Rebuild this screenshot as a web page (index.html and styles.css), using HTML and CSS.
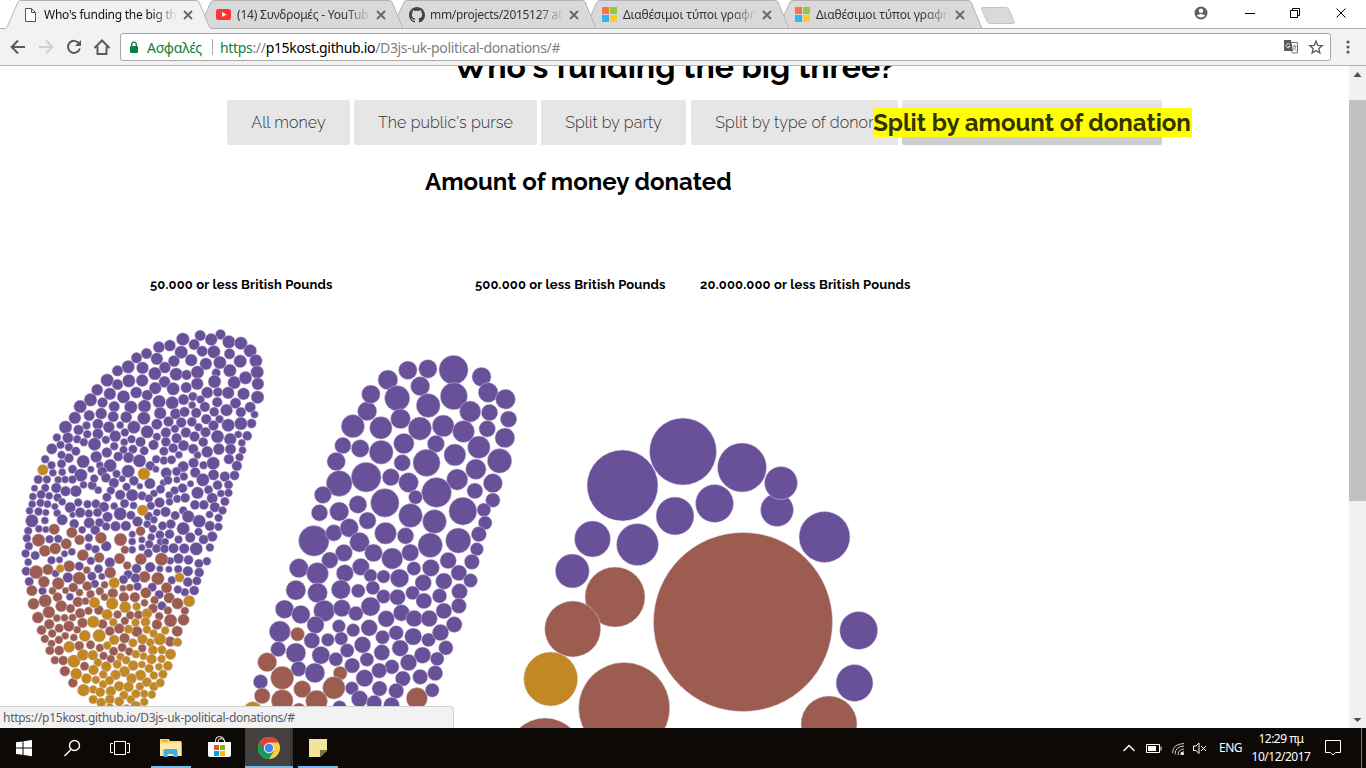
FILE: index.html
```html
<!DOCTYPE html>
<html lang="el">
<head>
<meta charset="utf-8">
<title>Who's funding the big three?</title>
<link rel="stylesheet" href="styles.css">
</head>
<body>
<div class="tabstrip">
  <div class="tab active">
    <svg class="shape" width="208" height="29"><path d="M0 29V28.500H5C7 28.500 7 27 8 25L18 2Q19 .5 21 .5H196Q198 .5 199 2L209 26Q210 28.500 212 28.500V29.500"/></svg>
    <svg class="fav" width="16" height="16" viewBox="0 0 16 16"><path d="M2.500 1.500h6l4 4v9h-10zM8.500 1.500v4h4" fill="#fff" stroke="#555"/></svg>
    <span class="title t1">Who's funding the big th</span>
    <svg class="x" width="10" height="10"><path d="M1 1l8 8M9 1l-8 8"/></svg>
  </div>
  <div class="tab">
    <svg class="shape" width="208" height="29"><path d="M6 28.500L18 2Q19 .5 21 .5H196Q198 .5 199 2L210 28.500Z"/></svg>
    <svg class="fav" width="16" height="16" viewBox="0 0 16 16"><rect x="0" y="2" width="15" height="11" rx="2.500" fill="#f33"/><path d="M6 5l4.500 2.500L6 10z" fill="#fff"/></svg>
    <span class="title t2">(14) Συνδρομές - YouTub</span>
    <svg class="x" width="10" height="10"><path d="M1 1l8 8M9 1l-8 8"/></svg>
  </div>
  <div class="tab">
    <svg class="shape" width="208" height="29"><path d="M6 28.500L18 2Q19 .5 21 .5H196Q198 .5 199 2L210 28.500Z"/></svg>
    <svg class="fav" width="16" height="16" viewBox="0 0 16 16"><path fill="#444" d="M8 0C3.600 0 0 3.600 0 8c0 3.500 2.300 6.500 5.500 7.600.4.100.5-.2.5-.4v-1.400c-2.200.5-2.700-1-2.700-1-.4-.9-.9-1.200-.9-1.200-.7-.5.100-.5.100-.5.800.100 1.200.8 1.200.8.700 1.300 1.900.9 2.300.7.100-.5.300-.9.500-1.100-1.800-.2-3.600-.9-3.600-4 0-.9.300-1.600.8-2.100-.1-.2-.4-1 .1-2.100 0 0 .7-.2 2.200.8a7.500 7.500 0 0 1 4 0c1.500-1 2.200-.8 2.200-.8.400 1.100.2 1.900.1 2.100.5.600.8 1.300.8 2.100 0 3.100-1.900 3.700-3.700 3.900.3.400.6.900.6 1.600v2.200c0 .2.100.5.500.4C13.700 14.500 16 11.500 16 8c0-4.400-3.600-8-8-8z"/></svg>
    <span class="title t3">mm/projects/2015127 at</span>
    <svg class="x" width="10" height="10"><path d="M1 1l8 8M9 1l-8 8"/></svg>
  </div>
  <div class="tab">
    <svg class="shape" width="208" height="29"><path d="M6 28.500L18 2Q19 .5 21 .5H196Q198 .5 199 2L210 28.500Z"/></svg>
    <svg class="fav" width="16" height="16"><path fill="#f8734c" d="M0 0h7v7H0z"/><path fill="#95c936" d="M8 0h7v7H8z"/><path fill="#33b4ef" d="M0 8h7v7H0z"/><path fill="#fecb35" d="M8 8h7v7H8z"/></svg>
    <span class="title t4">Διαθέσιμοι τύποι γραφη</span>
    <svg class="x" width="10" height="10"><path d="M1 1l8 8M9 1l-8 8"/></svg>
  </div>
  <div class="tab">
    <svg class="shape" width="208" height="29"><path d="M6 28.500L18 2Q19 .5 21 .5H196Q198 .5 199 2L210 28.500Z"/></svg>
    <svg class="fav" width="16" height="16"><path fill="#f8734c" d="M0 0h7v7H0z"/><path fill="#95c936" d="M8 0h7v7H8z"/><path fill="#33b4ef" d="M0 8h7v7H0z"/><path fill="#fecb35" d="M8 8h7v7H8z"/></svg>
    <span class="title t4">Διαθέσιμοι τύποι γραφη</span>
    <svg class="x" width="10" height="10"><path d="M1 1l8 8M9 1l-8 8"/></svg>
  </div>
  <svg class="newtab" width="36" height="20"><path d="M2.500.5H26Q28 .5 29 2.500L34 14.500Q35 16.500 33 16.500H10Q8 16.500 7 14.500L1.500 2Q1 .5 2.500.5z" fill="#d9d9d9" stroke="#c4c4c4"/></svg>
  <svg class="winctl" width="160" height="28" viewBox="1190 0 160 28">
    <circle cx="1201" cy="13" r="6.500" fill="#5f5f5f"/><circle cx="1201" cy="10.700" r="2.200" fill="#fff"/><path d="M1196.700 15.500q4.300-3 8.600 0q-4.300 4-8.600 0z" fill="#fff"/>
    <path d="M1245 13.500h10M1290.500 10.500h7v7h-7zM1292.500 10v-1.500h7v7h-2M1336.500 8.500l9 9M1345.500 8.500l-9 9" fill="none" stroke="#000"/>
  </svg>
</div>
<div class="toolbar">
  <svg class="navicons" width="120" height="36" viewBox="0 29 120 36" fill="none" stroke="#5a5a5a" stroke-width="2">
    <path d="M25 47H12M18 40.500L11.700 47l6.300 6.500"/>
    <path d="M39 47h13M46 40.500l6.300 6.500-6.300 6.500" stroke="#d0d0d0"/>
    <path d="M79 43.500a6 6 0 1 0 .8 5"/><path d="M81 40v6h-6z" fill="#5a5a5a" stroke="none"/>
    <path d="M94.500 48l7.500-7.500 7.500 7.500M97.500 46.500v7.500h9v-7.500"/>
  </svg>
  <div class="omnibox">
    <svg class="lock" width="10" height="13"><rect x="1" y="5" width="8" height="7" rx="1" fill="#0b8043"/><path d="M2.700 5V3.500a2.300 2.300 0 0 1 4.600 0V5" fill="none" stroke="#0b8043" stroke-width="1.300"/></svg>
    <span class="secure">Ασφαλές</span><i class="sep"></i>
    <span class="url"><b class="g">https</b>://<b>p15kost.github.io</b>/D3js-uk-political-donations/#</span>
    <svg class="boxicons" width="44" height="20" viewBox="1282 37 44 20">
      <path d="M1284 40h7l2 11h-8q-1 0-1-1z" fill="#5a5a5a"/><path d="M1290.500 42.500h7v10.500h-5l-2-2.500" fill="none" stroke="#777"/><path d="M1292.500 46h4M1294.500 45v1.500M1296 46q-1 3-3 4M1293.500 47.500l3 3" fill="none" stroke="#777" stroke-width=".8"/><path d="M1289.800 44.500a2 2 0 1 0 .2 2h-2" fill="none" stroke="#eee" stroke-width=".9"/>
      <path d="M1316 41l1.700 4.300 4.600.3-3.500 2.900 1.100 4.500-3.900-2.500-3.900 2.500 1.100-4.500-3.500-2.900 4.600-.3z" fill="none" stroke="#5a5a5a" stroke-width="1.300"/>
    </svg>
  </div>
  <svg class="menu" width="18" height="20"><g fill="#5a5a5a"><circle cx="9" cy="5" r="1.600"/><circle cx="9" cy="10" r="1.600"/><circle cx="9" cy="15" r="1.600"/></g></svg>
</div>
<div class="view">
  <main class="page">
    <h1>Who's funding the big three?</h1>
    <nav class="buttons">
      <a class="btn w1">All money</a><a class="btn w2">The public's purse</a><a class="btn w3">Split by party</a><a class="btn w4">Split by type of donor</a><a class="btn w5"><span class="mark">Split by amount of donation</span></a>
    </nav>
    <h2>Amount of money donated</h2>
    <svg class="chart" width="1349" height="508" viewBox="0 220 1349 508">
      <g class="labels">
        <text x="150" y="289" textLength="182.500">50.000 or less British Pounds</text>
        <text x="475" y="289" textLength="190.500">500.000 or less British Pounds</text>
        <text x="700" y="289" textLength="210.500">20.000.000 or less British Pounds</text>
      </g>
      <g id="bubbles"></g>
    </svg>
  </main>
  <div class="scroll">
    <svg width="17" height="17"><path d="M8.500 6l4 5h-8z" fill="#505050"/></svg>
    <div class="thumb"></div>
    <svg class="down" width="17" height="17"><path d="M8.500 11l4-4h-8z" fill="#505050"/></svg>
  </div>
  <div class="status"><span>https://p15kost.github.io/D3js-uk-political-donations/#</span></div>
</div>
<footer class="taskbar">
  <svg class="apps" width="345" height="40" viewBox="0 728 345 40">
    <path d="M16 742.300l6.500-.9v6.200H16zM23.500 741.200l8.500-1.200v7.600h-8.500zM16 748.600h6.500v6.200l-6.500-.9zM23.500 748.600H32v7.600l-8.500-1.200z" fill="#fff"/>
    <circle cx="74.500" cy="745.500" r="5" fill="none" stroke="#fff" stroke-width="1.400"/><path d="M71 749.500l-6.500 6.500" stroke="#fff" stroke-width="1.500"/>
    <path d="M114.500 741.500h11v13h-11zM113 743.500h-2.500v9h2.500M127 743.500h2.500v9H127" fill="none" stroke="#fff"/>
    <path d="M160 739h9l1 2h11.500v15H160z" fill="#f8d775"/><path d="M162 740h6v1.500h-6z" fill="#e8a915"/><path d="M160 743h21.500v13H160z" fill="#fce9a4"/><path d="M163.500 757v-6q0-2 2-2h10q2 0 2 2v6h-4v-3h-6v3z" fill="#3bb0e8"/>
    <path d="M208 742h23v13q0 2-2 2h-19q-2 0-2-2z" fill="#fff"/><path d="M215.500 742v-1.500q0-4 4-4t5 4v1.500M218 742q0-3.500 3-3.500t4 3.500" fill="none" stroke="#fff"/>
    <path d="M214 745h5v5h-5z" fill="#f25022"/><path d="M220 745h5v5h-5z" fill="#7fba00"/><path d="M214 751h5v5h-5z" fill="#00a4ef"/><path d="M220 751h5v5h-5z" fill="#ffb900"/>
    <path d="M245 728h45v38h-45z" fill="#444241"/><path d="M290 728h3v38h-3z" fill="#383534"/>
    <circle cx="269" cy="748" r="11" fill="#ffcd40"/><path d="M269 748L259.470 742.500A11 11 0 0 0 269 759L274 751z" fill="#109d58"/><path d="M259.470 742.500A11 11 0 0 1 278.530 742.500H269L264.500 750z" fill="#db4437"/><circle cx="269" cy="748" r="5.200" fill="#f1f1f1"/><circle cx="269" cy="748" r="4.200" fill="#4285f4"/>
    <path d="M309 739h18v11l-7 7h-11z" fill="#f0e59a"/><path d="M320 750h7v1l-7 6.500z" fill="#7b7442"/>
    <path d="M151 766h40v2h-40zM245 766h48v2h-48zM298 766h40v2h-40z" fill="#76b9ed"/>
  </svg>
  <svg class="tray" width="90" height="40" viewBox="1120 728 90 40" fill="none" stroke="#fff">
    <path d="M1123.500 751l5.500-5.500 5.500 5.500" stroke-width="1.400"/>
    <path d="M1146.500 744.500h13v8h-13zM1161 746.500v4"/><path d="M1148 746h8v5h-8z" fill="#fff" stroke="none"/>
    <path d="M1172.500 753q0-9 11.500-9.500M1175 754.500q0-8 9-8.500M1178 755q0-5.500 6-6M1180.500 755q0-3 3.500-3.500" stroke="#ccc"/><circle cx="1182.500" cy="753.500" r="1.500" fill="#fff" stroke="none"/>
    <path d="M1193.500 746v4.500h2.500l3 3v-10.500l-3 3zM1201 746l5 5M1206 746l-5 5"/>
  </svg>
  <span class="lang">ENG</span>
  <div class="clock"><span>12:29 πμ</span><span class="date">10/12/2017</span></div>
  <svg class="note" width="18" height="40" viewBox="1324 728 18 40"><path d="M1325.500 740.500h15v12h-5l-2.500 2.500-2.500-2.500h-5z" fill="none" stroke="#fff"/></svg>
  <i class="peek"></i>
</footer>
<script src="bubbles.js"></script>
</body>
</html>
```

FILE: styles.css
```css
* { box-sizing: border-box; }
body { margin: 0; width: 1366px; height: 768px; overflow: hidden; background: #fff; font-family: "Noto Sans", "Open Sans", sans-serif; display: flex; flex-direction: column; }
svg { display: block; flex: none; }
.tabstrip { height: 29px; flex: none; display: flex; border-bottom: 1px solid #b3b1b3; }
.tab { width: 193px; height: 29px; flex: none; display: flex; align-items: center; padding-left: 23px; position: relative; }
.tab:nth-child(1) { z-index: 5; }
.tab:nth-child(2) { z-index: 4; }
.tab:nth-child(3) { z-index: 3; }
.tab:nth-child(4) { z-index: 2; }
.tab:nth-child(5) { z-index: 1; }
.tab .shape { position: absolute; left: 0; top: 0; overflow: visible; }
.shape path { fill: #d9d9d9; stroke: #b3b3b3; }
.active .shape path { fill: #f2f2f2; }
.fav { position: relative; margin-right: 5px; }
.title { position: relative; width: 134px; height: 18px; line-height: 18px; font-size: 12px; letter-spacing: -.1px; color: #333; white-space: nowrap; overflow: hidden; -webkit-mask-image: linear-gradient(90deg, #000 108px, transparent 134px); mask-image: linear-gradient(90deg, #000 108px, transparent 134px); }
.t1 { color: #111; letter-spacing: -.25px; }
.t2 { letter-spacing: -.2px; }
.t3 { letter-spacing: -.3px; }
.x { position: relative; margin-left: 7px; fill: none; stroke: #666; stroke-width: 1.800; }
.newtab { margin: 7px 0 0 15px; }
.winctl { margin-left: auto; margin-right: 16px; }
.toolbar { height: 37px; flex: none; display: flex; align-items: flex-start; background: #f2f2f2; border-bottom: 1px solid #b6b4b6; }
.omnibox { width: 1211px; height: 28px; margin-top: 4px; display: flex; align-items: center; background: #fff; border: 1px solid #a8a8a8; border-radius: 3px; padding-left: 8px; font-size: 14px; white-space: nowrap; }
.lock { margin-right: 8px; }
.secure { color: #0b8043; width: 55px; letter-spacing: -.25px; }
.sep { width: 1px; height: 16px; background: #aaa; margin: 0 7px 0 10px; }
.url { color: #808080; letter-spacing: -.33px; }
.url b { font-weight: 400; color: #000; }
.url .g { color: #0b8043; }
.boxicons { margin-left: auto; margin-right: 4px; }
.menu { margin: 8px 0 0 8px; }
.view { height: 662px; flex: none; display: flex; position: relative; overflow: hidden; }
.page { width: 1349px; height: 662px; flex: none; overflow: hidden; font-family: "Raleway", Lato, sans-serif; color: #000; }
h1 { margin: -19px 0 0; height: 53px; line-height: 40px; font-size: 32px; font-weight: 700; text-align: center; white-space: nowrap; }
.buttons { margin-left: 227px; display: flex; height: 45px; }
.btn { height: 45px; border-radius: 2px; background: #e6e6e6; color: #333; font-size: 16px; font-weight: 300; letter-spacing: .08px; line-height: 45px; text-align: center; white-space: nowrap; margin-right: 4px; flex: none; }
.w1 { width: 123px; } .w2 { width: 183px; } .w3 { width: 145px; margin-right: 5px; } .w4 { width: 207px; }
.w5 { width: 260px; background: linear-gradient(#e6e6e6, #ccc); display: flex; justify-content: center; align-items: center; position: relative; }
.mark { flex: none; width: 319px; height: 29px; line-height: 29px; background: #ff0; color: #330; font-size: 24px; font-weight: 700; letter-spacing: 0; }
h2 { margin: 22px 0 0 425px; height: 53px; line-height: 30px; font-size: 24px; font-weight: 700; white-space: nowrap; }
.labels { font-size: 13px; font-weight: 700; }
.scroll { width: 17px; background: #f1f1f1; display: flex; flex-direction: column; }
.thumb { height: 401px; margin-top: 17px; background: #c1c1c1; }
.down { margin-top: auto; }
.status { position: absolute; left: 0; bottom: 0; width: 454px; height: 22px; padding-left: 3px; background: #f2f2f2; border: solid #d2d2d2; border-width: 1px 1px 0 0; border-radius: 0 4px 0 0; color: #5c5c5c; font-size: 12px; letter-spacing: -.28px; line-height: 22px; white-space: nowrap; }
.taskbar { height: 40px; flex: none; display: flex; background: #0d0907; color: #fff; font-size: 12px; }
.tray { margin-left: 775px; }
.lang { width: 24px; margin-left: 9px; line-height: 40px; letter-spacing: -.5px; }
.clock { width: 60px; margin-left: 8px; display: flex; flex-direction: column; align-items: center; line-height: 18px; padding-top: 2px; letter-spacing: -.5px; white-space: nowrap; }
.note { margin-left: 13px; }
.peek { margin-left: 19px; width: 1px; background: #777; }
```

FILE: bubbles.js
```js
// Each group: origin of its grid, grid units per pixel, colour, then "x,y,r" triples.
const P = '#69519a', B = '#9c5d50', O = '#c28823';
const groups = [
  [10, 320, 3, P, `631,43,14 570,46,15 603,58,17 518,57,18 552,73,15 479,76,16 446,81,16 656,65,18 692,69,18 720,92,18 576,93,15 611,95,18 658,101,15 513,96,18 409,100,15 379,113,15 440,116,17 491,123,16 543,120,17 587,131,17 629,127,18 690,123,18 737,122,18 354,140,18 397,143,17 464,142,16 322,152,15 434,160,18 498,162,18 529,164,14 562,156,18 618,158,12 659,151,18 741,156,18 291,180,18 322,193,15 356,182,18 396,181,17 463,185,16 561,191,17 613,184,18 672,187,18 706,173,18 743,191,17 261,209,16 299,221,17 378,217,16 435,204,17 489,206,18 528,202,15 340,230,18 411,225,15 548,229,12 591,217,16 623,216,13 654,218,17 700,221,17 742,231,18 241,239,18 277,247,14 520,238,15 571,238,11 621,246,14 676,249,15 447,244,18 486,248,18 546,255,10 584,260,14 720,261,15 210,259,18 312,259,15 362,261,18 403,258,18 273,280,16 237,286,15 309,289,15 450,279,17 496,281,15 523,275,14 558,278,14 612,275,13 649,270,17 692,276,14 733,283,10 194,293,17 348,291,16 401,294,18 628,297,11 588,297,14 545,305,13 513,307,14 475,304,14 440,312,15 724,310,13 692,310,18 654,315,18 610,316,14 565,321,11 263,312,15 229,316,11 296,321,16 330,315,10 371,321,18 166,321,18 205,329,14 411,335,18 344,337,11 494,326,11 527,337,14 586,336,14 467,337,14 263,341,15 231,342,11 315,348,16 440,350,11 553,349,14 622,349,18 684,343,10 711,347,13 660,357,17 140,352,11 173,353,15 201,357,11 287,359,11 364,357,11 342,366,10 499,354,14 467,365,13 391,365,14 579,366,13 221,366,11 253,372,18 430,374,14 695,368,10 151,374,11 176,381,11 312,378,11`],
  [10, 440, 3, P, `125,26,15 197,33,12 290,37,14 368,27,12 402,32,12 461,33,12 489,24,13 520,16,15 549,26,14 591,35,16 626,27,16 661,27,15 697,30,10 688,51,11 340,29,11 258,50,16 219,64,18 176,54,13 154,44,11 105,57,11 124,75,11 154,71,12 187,87,12 128,98,10 156,96,10 212,105,18 242,87,9 269,75,10 300,76,18 324,49,13 355,52,15 388,62,18 420,77,13 438,57,11 461,61,11 484,59,12 506,44,10 562,45,10 519,79,15 550,68,14 580,75,11 609,69,18 656,57,14 680,77,14 84,118,12 110,118,11 144,119,10 165,118,10 187,118,11 138,143,14 105,143,11 73,144,9 276,94,13 319,101,11 354,93,18 437,87,9 468,98,15 499,94,12 555,97,14 610,104,15 644,109,14 673,106,13 578,119,18 220,134,10 197,153,16 166,153,14 93,163,12 68,169,10 117,167,10 142,172,11 246,136,12 252,115,11 287,113,13 311,128,14 264,150,10 336,116,9 349,140,11 371,122,13 389,138,8 419,130,15 459,128,9 473,120,12 500,119,9 521,109,11 541,131,9 517,144,13 562,158,17 595,149,12 622,135,13 655,134,12 655,158,11 632,160,10 606,174,15 644,184,12 493,151,11 477,165,10 451,147,12 431,160,10 302,151,11 290,171,12 330,164,14 366,165,17 396,167,12 416,175,11 448,187,14 478,185,10 501,176,11 525,173,13 554,194,13 581,194,13 614,201,14 637,211,11 598,223,10 625,233,11 66,192,10 91,188,11 112,192,10 134,199,9 156,185,10 180,202,15 204,187,11 232,192,11 257,191,12 281,200,14 312,198,10 343,190,12 370,196,10 422,197,11 58,212,10 85,214,11 107,217,9 141,219,10 65,242,18 104,241,10 156,239,15 187,224,8 210,217,14 236,220,11 262,217,12 330,221,18 292,230,14 268,247,12 237,248,15 192,251,13 362,225,12 382,244,14 415,228,12 440,217,10 466,215,14 495,226,12 519,211,11 534,229,17 567,243,18 599,257,14 625,260,11 606,289,14 580,298,13 599,322,11 558,326,18 590,363,11 566,370,12 565,275,11 540,292,14 519,265,18 505,298,11 482,252,13 457,257,12 431,239,10 411,252,10 428,266,11 449,284,12 478,282,13 316,258,14 288,259,11 347,257,14 255,270,13 216,269,10 54,272,11 86,266,10 107,268,9 50,294,11 118,297,11 144,296,11 236,293,11 366,282,9 423,291,10 395,299,9 366,304,10 288,318,14 256,327,11 235,320,10 56,318,11 185,335,10 46,340,11 75,346,12 163,341,9 366,329,10 395,322,9 417,312,11 451,305,10 465,305,10 414,339,12 439,325,12 463,326,12 490,324,14 522,325,14 299,367,14 505,355,14 535,359,13 480,362,10 54,366,10 48,393,12 124,360,11 148,359,9 207,378,12 242,362,11 265,386,12 379,385,13 420,381,14 354,403,12 449,386,9 476,387,9 504,387,11 533,393,14 567,397,13 136,400,10 173,412,14 245,408,12 275,409,9 485,420,11`],
  [10, 440, 3, B, `132,267,15 185,277,15 85,300,18 168,311,15 208,299,14 272,293,16 331,298,18 391,273,13 104,332,16 135,325,16 218,345,16 344,329,11 267,352,14 328,355,15 392,357,16 454,357,18 78,396,19 113,388,15 177,378,16 230,390,10 351,376,11 300,397,16 207,414,18 403,410,16 443,415,18`],
  [10, 440, 3, O, `98,89,15 401,101,17 397,210,15 150,385,11 508,412,13`],
  [10, 570, 3, P, `57,34,12 254,41,11 340,28,12 376,24,13 382,49,11 426,51,12 533,36,13 560,32,12 552,61,13 524,66,11 503,58,11 447,73,12 97,62,11 179,80,10 455,107,12`],
  [10, 570, 3, B, `101,35,16 144,40,17 283,44,10 231,48,13 359,52,10 338,54,9 469,53,15 477,83,15 407,68,15 374,81,14 341,81,14 308,69,14 269,63,11 241,72,11 208,67,10 189,52,13 166,61,9 127,62,10 65,61,15 142,81,13 70,101,16 105,92,18 153,108,16 203,95,14 226,93,10 283,81,10 403,98,10 433,90,11 428,115,13 473,121,11 502,100,16 524,122,11 447,138,11 481,151,18 520,149,16 440,163,14 501,183,15 480,214,14 116,126,17 83,142,16 181,115,12 210,129,14 235,122,11 266,120,13 322,133,11 344,152,11 360,135,11 385,134,12 277,162,13 217,158,14 187,142,10 163,143,10 140,144,10 117,162,14 94,180,13 147,174,12 176,168,15 201,179,10 126,190,11 165,197,10 191,202,10 299,183,13 327,175,14 380,184,15 104,206,11 124,220,10 146,209,11 207,227,13 241,224,12 269,233,11 343,204,14 119,241,12 147,241,13 134,270,11 159,271,13 280,257,11 302,266,11 310,243,12 336,232,12 357,244,11 396,234,11 164,303,14 223,288,12 188,338,13`],
  [10, 570, 3, O, `312,38,15 253,97,15 306,100,17 345,111,16 379,109,11 410,130,14 537,93,16 465,181,11 502,216,12 449,207,17 291,133,15 376,157,11 406,155,13 309,156,11 249,155,17 224,197,16 267,196,18 355,177,12 410,178,11 430,190,11 177,230,16 291,226,11 312,209,14 368,218,12 397,207,14 420,217,11 191,273,18 218,254,16 248,255,14 263,277,11 377,252,11 331,260,11 348,270,11 428,240,13 455,239,12 481,252,15 400,258,10 424,267,14 454,266,11 473,287,13 198,311,16 250,299,14 288,289,14 321,282,12 369,286,14 395,283,10 417,295,12 446,290,10 458,312,12 431,316,11 391,315,15 343,304,15 316,314,14 279,313,11 229,325,14 257,329,11 279,342,11 298,331,12 364,325,14 220,360,17 249,358,11 270,366,13 302,363,14 327,348,14 355,350,14 389,349,11 410,336,13 431,349,12 450,338,12 425,373,11 402,371,11 377,371,12 341,375,12 362,388,11 402,395,11 249,388,12 273,397,13 299,388,13 327,394,13 377,408,14 299,412,11 349,415,11`],
  [320, 340, 3, P, `400,89,43 323,86,27 263,90,27 203,119,29 484,110,28 141,213,28 152,162,27 231,174,37 300,138,28 401,168,40 504,157,29 556,177,29 324,196,35 450,214,31 508,217,24 565,237,24 98,258,34 182,263,33 241,236,29 299,265,34 369,257,32 430,274,32 501,266,24 554,293,29 68,316,24 120,325,26 183,336,35 251,310,30 347,311,25 476,321,33 404,344,32 48,364,27 246,368,24 319,368,40 538,362,36 467,387,30 57,430,38 138,411,44 212,411,25 265,427,29 411,418,31 349,457,44 518,429,28 464,452,23 8,464,25 286,471,20 518,480,21 194,488,42 113,493,26 57,514,28 -2,518,24 428,513,41 491,509,20 271,526,35 142,541,25 343,544,35 495,548,20`],
  [230, 520, 3, P, `251,62,45 311,38,24 357,23,27 466,39,32 526,47,24 388,66,29 600,75,36 684,61,37 746,42,22 740,87,19 430,98,26 341,98,25 486,115,31 540,97,25 299,120,24 654,121,24 725,125,22 206,144,28 262,160,32 344,159,25 392,140,25 421,166,19 460,169,19 508,174,27 551,145,20 602,143,25 686,158,23 721,181,20 641,183,24 579,188,24 197,210,29 262,218,29 332,208,28 384,212,20 428,203,20 460,229,20 502,231,23 547,218,20 581,242,23 628,227,21 688,214,23 163,267,27 212,283,27 282,272,31 335,264,25 377,280,21 421,259,28 514,278,24 468,296,24 552,295,24 597,295,24 641,272,23 686,257,22 672,313,23 149,334,31 256,314,25 326,318,19 369,330,19 417,323,24 498,338,21 457,351,20 549,349,25 595,359,20 631,337,24 245,361,23 293,359,19 333,355,19 397,374,24 351,391,20 144,387,22 197,398,29 272,405,26 317,417,20 410,418,20 455,397,23 510,384,24 577,405,24 647,383,21 621,416,20 535,427,24 485,440,21 447,451,22 366,436,22 205,446,22 254,458,29 91,485,21 403,474,25 365,504,19 448,505,22 518,475,22 570,470,22 615,459,22 606,510,20 498,512,22 328,562,20 388,536,24 432,548,22 484,555,23`],
  [230, 520, 3, B, `202,342,20 111,426,28 156,473,34 330,459,20 311,503,33 216,507,25 96,527,23 156,541,32 259,543,32 206,568,19 560,534,31`],
  [230, 520, 3, O, `68,572,27`],
  [0, 0, 1, P, `683,451.5,33.500 622.5,485.5,35.500 742,467.5,24.500 777,510,16.500 781,483,16.500 714.5,503.5,19 675,516,19 637.5,544.5,21 592.5,539,18 572.3,571,17 824.5,537,25.500 858.7,630.5,19 854.5,683,18.500`],
  [0, 0, 1, B, `743,622,89.500 615,597,30 572.7,629,28 624.2,708,45.500 829,724,28 545,756,38`],
  [0, 0, 1, O, `550.7,679,27`]
];
const layer = document.getElementById('bubbles');
for (const [ox, oy, k, fill, list] of groups) {
  const pad = ox === 10 ? 0.5 : k === 3 ? 0.3 : 0;
  const shift = k === 3 ? 0.2 : 0;
  for (const item of list.split(' ')) {
    const [x, y, r] = item.split(',').map(Number);
    const c = document.createElementNS('http://www.w3.org/2000/svg', 'circle');
    c.setAttribute('cx', (ox + x / k + shift).toFixed(2));
    c.setAttribute('cy', (oy + y / k + shift).toFixed(2));
    c.setAttribute('r', (r / k + pad).toFixed(2));
    c.setAttribute('fill', fill);
    c.setAttribute('stroke', '#d9d2e6');
    c.setAttribute('stroke-width', '.5');
    layer.appendChild(c);
  }
}
```
